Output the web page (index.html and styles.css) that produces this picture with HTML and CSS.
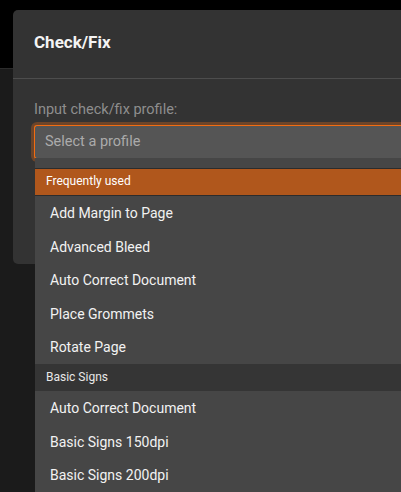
FILE: index.html
```html
<!DOCTYPE html>
<html>
<head>
<meta charset="utf-8">
<link rel="stylesheet" href="styles.css">
</head>
<body>
<div class="backdrop">
  <div class="topbar"></div>
  <div class="lower"></div>
</div>
<div class="modal">
  <div class="modal-header">
    <h1 class="title">Check/Fix</h1>
  </div>
  <div class="modal-body">
    <label class="label">Input check/fix profile:</label>
    <div class="select">Select a profile</div>
  </div>
</div>
<div class="dropdown">
  <div class="group group-active">Frequently used</div>
  <div class="item">Add Margin to Page</div>
  <div class="item">Advanced Bleed</div>
  <div class="item">Auto Correct Document</div>
  <div class="item">Place Grommets</div>
  <div class="item">Rotate Page</div>
  <div class="group">Basic Signs</div>
  <div class="item">Auto Correct Document</div>
  <div class="item">Basic Signs 150dpi</div>
  <div class="item">Basic Signs 200dpi</div>
</div>
</body>
</html>
```

FILE: styles.css
```css
html, body {
  margin: 0;
  padding: 0;
  width: 401px;
  height: 492px;
  overflow: hidden;
  background: #1b1b1b;
  font-family: Roboto, "Noto Sans", sans-serif;
}
.backdrop {
  display: flex;
  flex-direction: column;
  height: 492px;
}
.topbar {
  height: 68px;
  background: #000;
  border-bottom: 1px solid #2c2c2c;
}
.lower {
  flex: 1;
  background: #1b1b1b;
}
.modal {
  position: absolute;
  left: 13px;
  top: 10px;
  width: 388px;
  height: 254px;
  background: #333333;
  border-radius: 5px 0 0 5px;
}
.modal-header {
  box-sizing: border-box;
  height: 69px;
  border-bottom: 1px solid #4d4d4d;
  display: flex;
  align-items: center;
  padding: 0 21px 4px;
}
.title {
  margin: 0;
  color: #f4f4f4;
  font-size: 17px;
  font-weight: bold;
}
.modal-body {
  padding: 22px 0 0 21px;
  display: flex;
  flex-direction: column;
}
.label {
  color: #8e8e8e;
  font-size: 14.5px;
  line-height: 18px;
  margin-bottom: 6px;
}
.select {
  height: 32px;
  border: 1px solid #f26d12;
  border-right: none;
  border-radius: 3px 0 0 3px;
  background: #555555;
  box-shadow: 0 0 0 3px rgba(180, 90, 30, 0.45);
  color: #ababab;
  font-size: 14.5px;
  line-height: 32px;
  padding-left: 10px;
}
.dropdown {
  position: absolute;
  left: 35px;
  top: 158px;
  width: 366px;
  background: #464646;
  padding-top: 10px;
}
.group {
  height: 27px;
  line-height: 26px;
  background: #353535;
  color: #e8e8e8;
  font-size: 12px;
  padding-left: 11px;
}
.group-active {
  height: 26px;
  line-height: 25px;
  background: #b0571c;
  color: #fff;
  border-top: 1px solid #2c2c2c;
  border-bottom: 1px solid #2c2c2c;
}
.item {
  box-sizing: border-box;
  height: 33.6px;
  padding-top: 1px;
  line-height: 33px;
  color: #f2f2f2;
  font-size: 14px;
  padding-left: 15px;
}
```
